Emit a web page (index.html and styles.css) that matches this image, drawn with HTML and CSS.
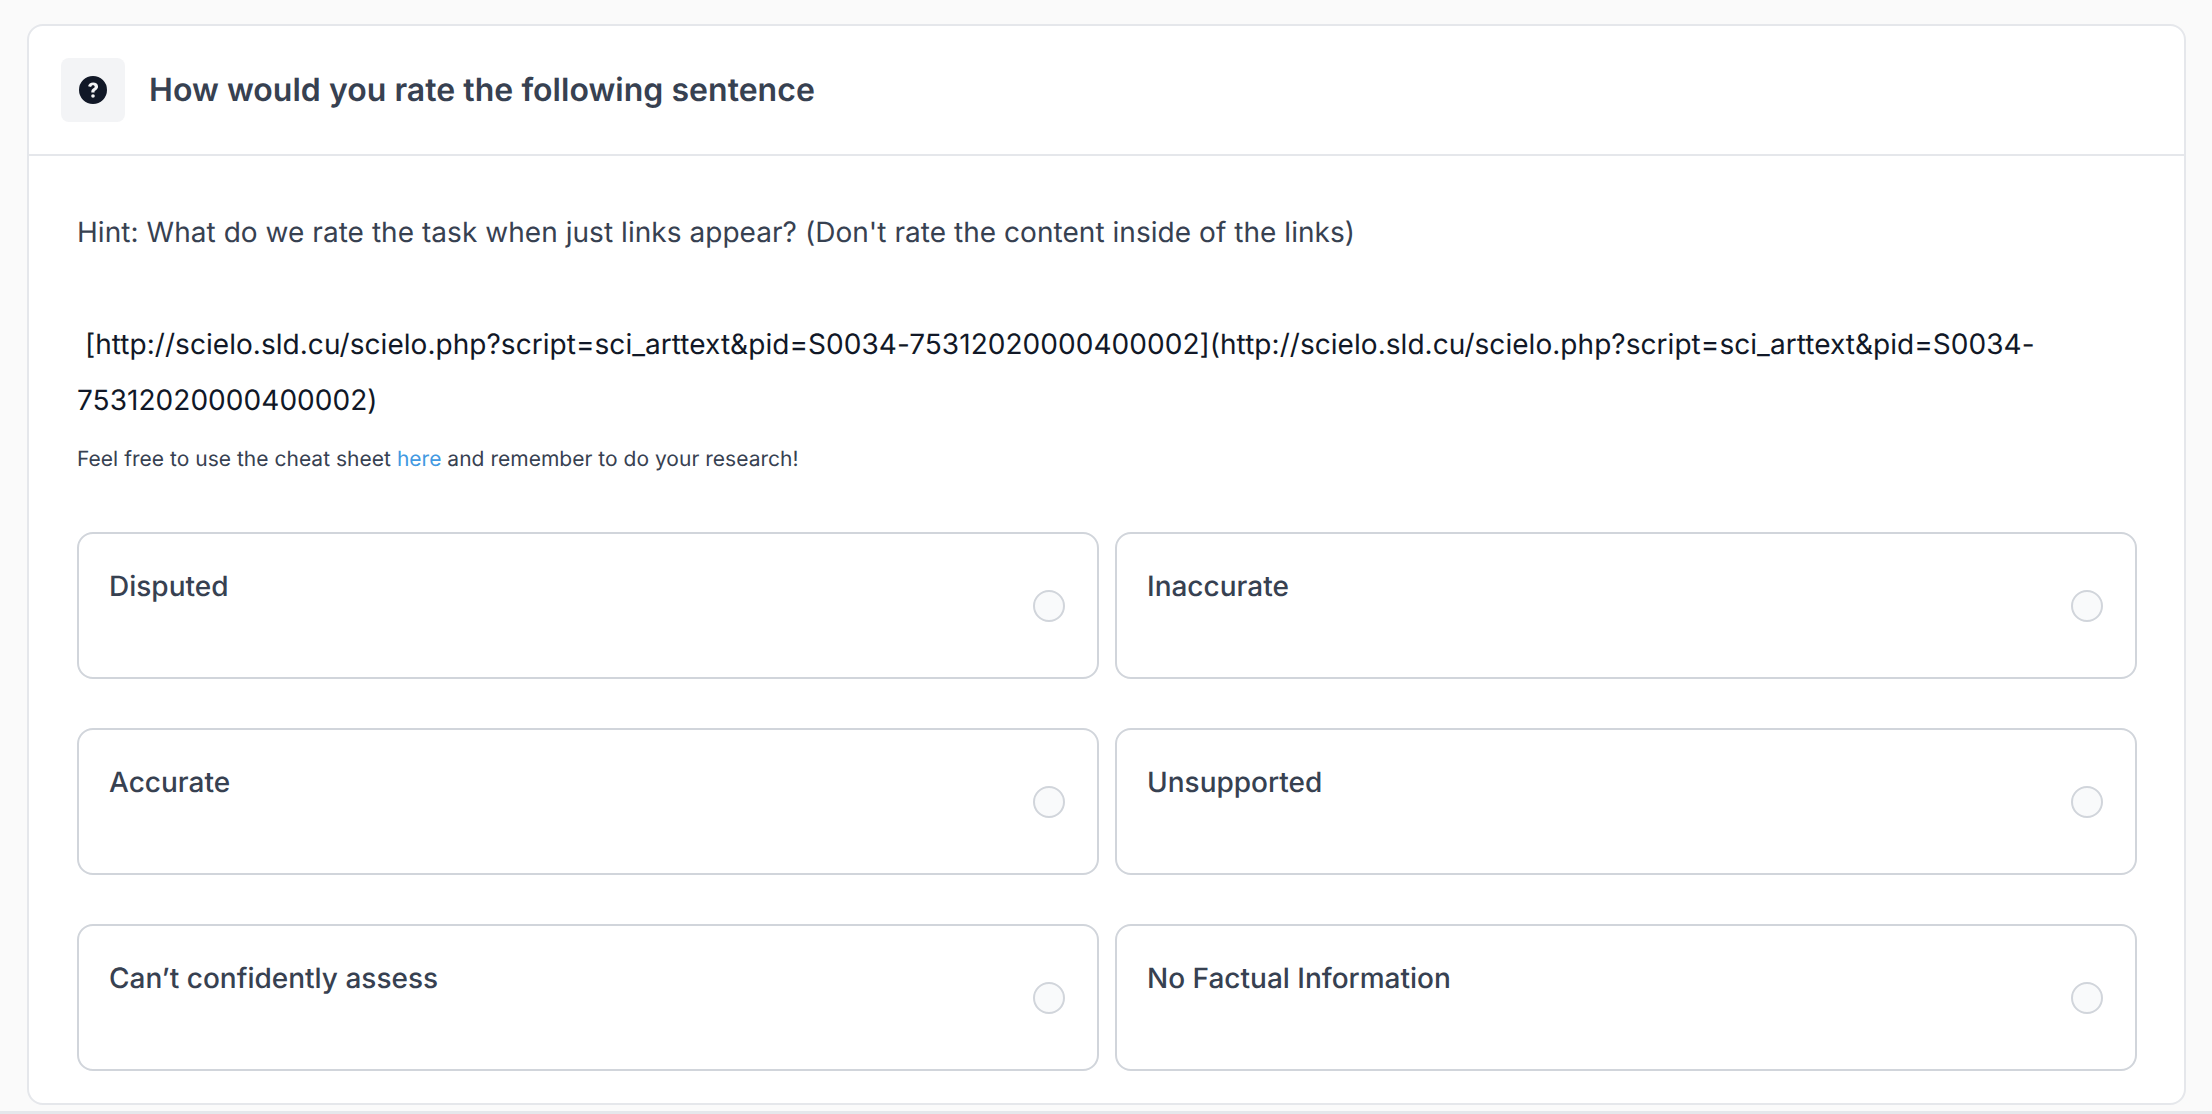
FILE: index.html
```html
<!DOCTYPE html>
<html lang="en">
<head>
<meta name="viewport" content="width=device-width, initial-scale=1.0">
<meta charset="utf-8">
<title>Rate the sentence</title>
<link rel="stylesheet" href="styles.css">
</head>
<body>
<div class="card">
  <div class="card-head">
    <div class="icon-box">
      <svg class="help-icon" width="28" height="28" viewBox="0 0 20 20">
        <path fill="#111827" fill-rule="evenodd" d="M10 0a10 10 0 1 0 0 20 10 10 0 0 0 0-20zm.1 4.6c-1.9 0-3.3 1-3.6 2.8l2.2.4c.1-.8.6-1.2 1.3-1.2.7 0 1.2.4 1.2 1 0 .5-.3.8-.9 1.2-1 .7-1.5 1.3-1.5 2.5v.4h2.3v-.3c0-.6.2-.9.9-1.3 1-.7 1.6-1.4 1.6-2.6 0-1.8-1.5-2.9-3.5-2.9zM10 13a1.3 1.3 0 1 0 0 2.6 1.3 1.3 0 0 0 0-2.6z"/>
      </svg>
    </div>
    <h1 class="title">How would you rate the following sentence</h1>
  </div>
  <div class="card-body">
    <p class="hint">Hint: What do we rate the task when just links appear? (Don't rate the content inside of the links)</p>
    <p class="sentence">&nbsp;[http://scielo.sld.cu/scielo.php?script=sci_arttext&amp;pid=S0034-75312020000400002](http://scielo.sld.cu/scielo.php?script=sci_arttext&amp;pid=S0034-75312020000400002)</p>
    <p class="note">Feel free to use the cheat sheet <a href="#">here</a> and remember to do your research!</p>
    <div class="options">
      <label class="option"><span class="option-text">Disputed</span><span class="radio"></span></label>
      <label class="option"><span class="option-text">Inaccurate</span><span class="radio"></span></label>
      <label class="option"><span class="option-text">Accurate</span><span class="radio"></span></label>
      <label class="option"><span class="option-text">Unsupported</span><span class="radio"></span></label>
      <label class="option"><span class="option-text">Can’t confidently assess</span><span class="radio"></span></label>
      <label class="option"><span class="option-text">No Factual Information</span><span class="radio"></span></label>
    </div>
  </div>
</div>
</body>
</html>
```

FILE: styles.css
```css
html, body {
  margin: 0;
  height: 1114px;
  overflow: hidden;
}
body {
  box-sizing: border-box;
  padding: 24px 26px 0 27px;
  background-color: #fafafa;
  border-bottom: 3px solid #e5e7eb;
  font-family: Inter, "Liberation Sans", sans-serif;
  color: #374151;
  text-rendering: geometricPrecision;
}
.card {
  box-sizing: border-box;
  height: 1081px;
  background-color: #fff;
  border: 2px solid #e5e7eb;
  border-radius: 16px;
}
.card-head {
  display: flex;
  align-items: center;
  gap: 24px;
  padding: 32px;
  border-bottom: 2px solid #e5e7eb;
}
.icon-box {
  display: flex;
  align-items: center;
  justify-content: center;
  width: 64px;
  height: 64px;
  background-color: #f3f4f6;
  border-radius: 8px;
}
.title {
  margin: 0;
  font-size: 32px;
  font-weight: 600;
  line-height: 48px;
  letter-spacing: 0.03px;
}
.card-body {
  padding: 48px 47px 0 48px;
}
.hint {
  margin: 0;
  font-size: 28px;
  line-height: 56px;
  letter-spacing: 0.045px;
}
.sentence {
  margin: 56px 0 0;
  font-size: 28px;
  line-height: 56px;
  letter-spacing: 0.045px;
  color: #111827;
}
.note {
  margin: 8px 0 0;
  font-size: 21px;
  line-height: 48px;
  letter-spacing: 0.02px;
}
.note a {
  color: #4299e1;
  text-decoration: none;
}
.options {
  display: grid;
  grid-template-columns: 1fr 1fr;
  gap: 49px 16px;
  margin-top: 48px;
}
.option {
  box-sizing: border-box;
  display: flex;
  justify-content: space-between;
  align-items: center;
  height: 147px;
  padding: 0 32px 0 30px;
  border: 2px solid #d1d5db;
  border-radius: 16px;
}
.option-text {
  align-self: flex-start;
  margin-top: 36px;
  font-size: 28px;
  font-weight: 500;
  line-height: 32px;
}
.radio {
  box-sizing: border-box;
  width: 32px;
  height: 32px;
  background-color: #f9fafb;
  border: 2px solid #d1d5db;
  border-radius: 50%;
}
```
